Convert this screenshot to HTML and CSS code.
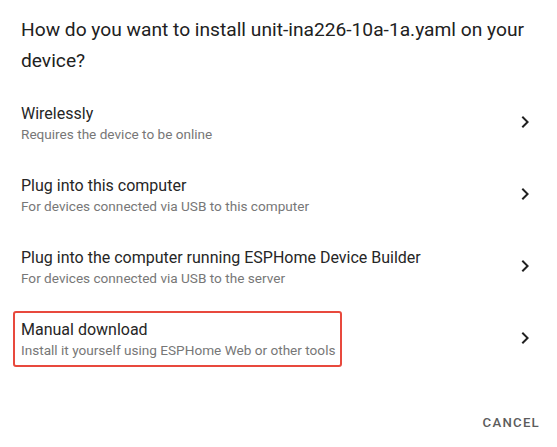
FILE: index.html
```html
<!DOCTYPE html>
<html>
<head>
<meta charset="utf-8">
<link rel="stylesheet" href="styles.css">
</head>
<body>
<div class="dialog">
  <h2 class="title">How do you want to install unit-ina226-10a-1a.yaml on your device?</h2>
  <ul class="list">
    <li class="item">
      <div class="text">
        <div class="primary">Wirelessly</div>
        <div class="secondary">Requires the device to be online</div>
      </div>
      <svg class="chev" viewBox="0 0 24 24"><path d="M8.59,16.58L13.17,12L8.59,7.41L10,6L16,12L10,18L8.59,16.58Z"/></svg>
    </li>
    <li class="item">
      <div class="text">
        <div class="primary">Plug into this computer</div>
        <div class="secondary">For devices connected via USB to this computer</div>
      </div>
      <svg class="chev" viewBox="0 0 24 24"><path d="M8.59,16.58L13.17,12L8.59,7.41L10,6L16,12L10,18L8.59,16.58Z"/></svg>
    </li>
    <li class="item">
      <div class="text">
        <div class="primary">Plug into the computer running ESPHome Device Builder</div>
        <div class="secondary">For devices connected via USB to the server</div>
      </div>
      <svg class="chev" viewBox="0 0 24 24"><path d="M8.59,16.58L13.17,12L8.59,7.41L10,6L16,12L10,18L8.59,16.58Z"/></svg>
    </li>
    <li class="item">
      <div class="text highlight">
        <div class="primary">Manual download</div>
        <div class="secondary">Install it yourself using ESPHome Web or other tools</div>
      </div>
      <svg class="chev" viewBox="0 0 24 24"><path d="M8.59,16.58L13.17,12L8.59,7.41L10,6L16,12L10,18L8.59,16.58Z"/></svg>
    </li>
  </ul>
  <div class="actions">
    <button class="btn">Cancel</button>
  </div>
</div>
</body>
</html>
```
FILE: styles.css
```css
html, body {
  margin: 0;
  padding: 0;
  background: #ffffff;
}
body {
  font-family: Roboto, "Noto Sans", sans-serif;
  color: #212121;
}
.dialog {
  width: 557px;
  height: 447px;
  display: flex;
  flex-direction: column;
}
.title {
  margin: 0;
  padding: 14px 20px 0 21px;
  font-size: 19.2px;
  font-weight: 400;
  line-height: 31px;
  color: #212121;
}
.list {
  list-style: none;
  margin: 10px 0 0;
  padding: 0;
}
.item {
  height: 72px;
  display: flex;
  align-items: center;
  justify-content: space-between;
  padding: 0 20px 0 21px;
}
.text {
  position: relative;
  width: fit-content;
  padding-top: 4px;
}
.primary {
  font-size: 16px;
  line-height: 20px;
  color: #262626;
}
.secondary {
  font-size: 13.6px;
  line-height: 20px;
  color: #777777;
}
.highlight::before {
  content: "";
  position: absolute;
  left: -8px;
  right: -7px;
  top: -5px;
  bottom: -7px;
  border: 2px solid #e8493d;
  border-radius: 3px;
}
.chev {
  width: 24px;
  height: 24px;
  fill: #212121;
  flex: none;
}
.actions {
  display: flex;
  justify-content: flex-end;
  padding: 30px 9px 0 0;
}
.btn {
  font-family: Roboto, sans-serif;
  font-size: 13.2px;
  font-weight: 500;
  letter-spacing: 1.25px;
  text-transform: uppercase;
  color: #5c5c5c;
  background: none;
  border: none;
  padding: 0 8px;
  height: 36px;
}
```
